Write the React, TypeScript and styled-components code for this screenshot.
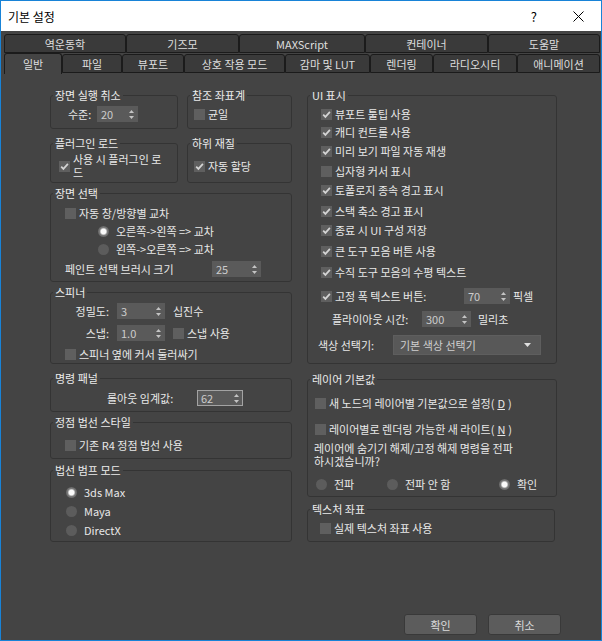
import React from "react";
import styled, { createGlobalStyle } from "styled-components";

const GlobalStyle = createGlobalStyle`
  html, body { margin: 0; padding: 0; background: #fff; }
  body { font-family: "Noto Sans CJK KR", "Noto Sans", sans-serif; font-size: 11px; }
  * { box-sizing: border-box; }
`;

const Window = styled.div`
  width: 602px;
  height: 641px;
  border: 1px solid #1883d7;
  background: #444444;
  display: flex;
  flex-direction: column;
  color: #e8e8e8;
`;

const TitleBar = styled.div`
  height: 30px;
  background: #ffffff;
  display: flex;
  align-items: center;
  padding: 0 17px 0 7px;
  color: #000;
`;

const Title = styled.span`
  font-size: 12px;
  flex: 1;
`;

const TitleControls = styled.div`
  display: flex;
  align-items: center;
  gap: 36px;
  font-size: 13px;
`;

const TabStrip = styled.div`
  padding: 3px 1px 0 3px;
  display: flex;
  flex-direction: column;
`;

const TabRow = styled.div<{ $h: number }>`
  display: flex;
  height: ${(p) => p.$h}px;
  align-items: flex-start;
`;

const Tab = styled.div<{ $w?: number; $active?: boolean; $bottom?: boolean }>`
  ${(p) => (p.$w ? `width: ${p.$w}px;` : "flex: 1;")}
  height: ${(p) => (p.$active ? 21 : 19)}px;
  margin-top: ${(p) => (p.$bottom && !p.$active ? 1 : 0)}px;
  background: ${(p) => (p.$active ? "#444444" : "#3a3a3a")};
  border: 1px solid #1b1b1b;
  border-bottom: ${(p) => (p.$active ? "none" : "1px solid #1b1b1b")};
  border-radius: 3px 3px 0 0;
  position: relative;
  z-index: ${(p) => (p.$active ? 1 : 0)};
  display: flex;
  align-items: center;
  justify-content: center;
  color: #dedede;
  line-height: 14px;
  white-space: nowrap;
`;

const Main = styled.div`
  flex: 1;
  display: flex;
  gap: 15px;
  padding: 15px 0 0 49px;
  align-items: flex-start;
`;

const Column = styled.div<{ $w: number }>`
  width: ${(p) => p.$w}px;
  display: flex;
  flex-direction: column;
`;

const Pair = styled.div<{ $mt?: number }>`
  display: flex;
  gap: 9px;
  margin-top: ${(p) => p.$mt ?? 0}px;
`;

const Group = styled.fieldset<{ $w?: number; $mt?: number; $pb?: number }>`
  margin: ${(p) => p.$mt ?? 0}px 0 0 0;
  padding: 0 0 ${(p) => p.$pb ?? 0}px 0;
  ${(p) => (p.$w ? `width: ${p.$w}px;` : "")}
  border: 1px solid #343434;
  border-radius: 3px;
  min-width: 0;
`;

const Legend = styled.legend`
  margin-left: 2px;
  padding: 0 2px;
  line-height: 14px;
  color: #ececec;
`;

const Row = styled.div<{ $mt?: number; $h: number; $pl?: number; $gap?: number }>`
  display: flex;
  align-items: center;
  height: ${(p) => p.$h}px;
  margin-top: ${(p) => p.$mt ?? 0}px;
  padding-left: ${(p) => p.$pl ?? 0}px;
  gap: ${(p) => p.$gap ?? 0}px;
  white-space: nowrap;
  line-height: 14px;
`;

const Label = styled.span<{ $w?: number; $right?: boolean }>`
  ${(p) => (p.$w ? `width: ${p.$w}px; flex: none;` : "")}
  text-align: ${(p) => (p.$right ? "right" : "left")};
`;

const Suffix = styled.span<{ $ml?: number }>`
  margin-left: ${(p) => p.$ml ?? 0}px;
`;

const Para = styled.div<{ $mt?: number; $pl?: number }>`
  margin-top: ${(p) => p.$mt ?? 0}px;
  padding-left: ${(p) => p.$pl ?? 0}px;
  line-height: 13px;
`;

const Box = styled.span`
  width: 11px;
  height: 11px;
  flex: none;
  background: #5f5f5f;
  display: inline-flex;
  align-items: center;
  justify-content: center;
`;

const CheckItem = styled.span<{ $gap?: number }>`
  display: inline-flex;
  align-items: center;
  gap: ${(p) => p.$gap ?? 3}px;
`;

const Dot = styled.span<{ $on?: boolean }>`
  width: 11px;
  height: 11px;
  flex: none;
  border-radius: 50%;
  background: ${(p) =>
    p.$on
      ? "radial-gradient(circle, #fafafa 0 2.5px, #c9c9c9 3px, #7a7a7a 4px, #666 5.5px)"
      : "#5c5c5c"};
`;

const RadioItem = styled.span<{ $w?: number }>`
  display: inline-flex;
  align-items: center;
  gap: 7px;
  ${(p) => (p.$w ? `width: ${p.$w}px;` : "")}
`;

const SpinBox = styled.div<{ $w: number; $focus?: boolean }>`
  width: ${(p) => p.$w}px;
  height: 16px;
  flex: none;
  background: #5a5a5a;
  border: 1px solid ${(p) => (p.$focus ? "#a3a3a3" : "#5a5a5a")};
  color: #cccccc;
  display: flex;
  align-items: center;
  justify-content: space-between;
  padding: 0 3px 0 3px;
  line-height: 14px;
`;

const Dropdown = styled.div`
  width: 148px;
  height: 20px;
  background: #585858;
  border: 1px solid #5e5e5e;
  color: #cfcfcf;
  display: flex;
  align-items: center;
  justify-content: space-between;
  padding: 0 9px 0 6px;
`;

const Footer = styled.div`
  display: flex;
  justify-content: flex-end;
  gap: 11px;
  padding: 0 40px 5px 0;
`;

const Button = styled.div`
  width: 73px;
  height: 21px;
  background: #5c5c5c;
  border: 1px solid #393939;
  border-radius: 3px;
  color: #dcdcdc;
  display: flex;
  align-items: center;
  justify-content: center;
`;

const Check = ({ on, children }: { on?: boolean; children?: React.ReactNode }) => (
  <CheckItem>
    <Box>
      {on && (
        <svg width="11" height="11" viewBox="0 0 11 11">
          <path d="M2.2 5.6 L4.4 7.9 L8.9 2.9" fill="none" stroke="#d4d4d4" strokeWidth="1.7" />
        </svg>
      )}
    </Box>
    {children}
  </CheckItem>
);

const Radio = ({ on, w, children }: { on?: boolean; w?: number; children: React.ReactNode }) => (
  <RadioItem $w={w}>
    <Dot $on={on} />
    <span>{children}</span>
  </RadioItem>
);

const Arrows = () => (
  <svg width="5" height="9" viewBox="0 0 5 9">
    <path d="M2.5 0 L5 3 L0 3 Z" fill="#c4c4c4" />
    <path d="M0 6 L5 6 L2.5 9 Z" fill="#c4c4c4" />
  </svg>
);

const Spinner = ({ w, value, focus }: { w: number; value: string; focus?: boolean }) => (
  <SpinBox $w={w} $focus={focus}>
    <span>{value}</span>
    <Arrows />
  </SpinBox>
);

const topTabs: [string, number | undefined][] = [
  ["역운동학", 122],
  ["기즈모", 113],
  ["MAXScript", 126],
  ["컨테이너", 123],
  ["도움말", undefined],
];

const bottomTabs: [string, number | undefined][] = [
  ["일반", 58],
  ["파일", 60],
  ["뷰포트", 62],
  ["상호 작용 모드", 101],
  ["감마 및 LUT", 85],
  ["렌더링", 63],
  ["라디오시티", 84],
  ["애니메이션", undefined],
];

const uiChecks: [string, boolean, number][] = [
  ["뷰포트 툴팁 사용", true, 4],
  ["캐디 컨트롤 사용", true, 2],
  ["미리 보기 파일 자동 재생", true, 3],
  ["십자형 커서 표시", false, 4],
  ["토폴로지 종속 경고 표시", true, 3],
  ["스택 축소 경고 표시", true, 5],
  ["종료 시 UI 구성 저장", true, 3],
  ["큰 도구 모음 버튼 사용", true, 5],
  ["수직 도구 모음의 수평 텍스트", true, 5],
];

export default function App() {
  return (
    <>
      <GlobalStyle />
      <Window>
        <TitleBar>
          <Title>기본 설정</Title>
          <TitleControls>
            <span>?</span>
            <svg width="11" height="11" viewBox="0 0 11 11">
              <path d="M0.5 0.5 L10.5 10.5 M10.5 0.5 L0.5 10.5" stroke="#000" strokeWidth="1" />
            </svg>
          </TitleControls>
        </TitleBar>

        <TabStrip>
          <TabRow $h={19}>
            {topTabs.map(([name, w]) => (
              <Tab key={name} $w={w}>
                {name}
              </Tab>
            ))}
          </TabRow>
          <TabRow $h={20}>
            {bottomTabs.map(([name, w], i) => (
              <Tab key={name} $w={w} $bottom $active={i === 0}>
                {name}
              </Tab>
            ))}
          </TabRow>
        </TabStrip>

        <Main>
          <Column $w={242}>
            <Pair>
              <Group $w={128} $pb={6}>
                <Legend>장면 실행 취소</Legend>
                <Row $mt={4} $h={16} $pl={17}>
                  <Label $w={29}>수준:</Label>
                  <Spinner w={41} value="20" />
                </Row>
              </Group>
              <Group $w={105} $pb={6}>
                <Legend>참조 좌표계</Legend>
                <Row $mt={4} $h={16} $pl={6}>
                  <Check>균일</Check>
                </Row>
              </Group>
            </Pair>

            <Pair $mt={7}>
              <Group $w={128} $pb={3}>
                <Legend>플러그인 로드</Legend>
                <Row $mt={3} $h={26} $pl={8}>
                  <Check on>
                    <Para>
                      사용 시 플러그인 로<br />드
                    </Para>
                  </Check>
                </Row>
              </Group>
              <Group $w={105} $pb={3}>
                <Legend>하위 재질</Legend>
                <Row $mt={3} $h={26} $pl={6}>
                  <Check on>자동 할당</Check>
                </Row>
              </Group>
            </Pair>

            <Group $mt={3} $pb={1}>
              <Legend>장면 선택</Legend>
              <Row $mt={4} $h={18} $pl={14}>
                <Check>자동 창/방향별 교차</Check>
              </Row>
              <Row $h={18} $pl={47}>
                <Radio on>오른쪽-&gt;왼쪽 =&gt; 교차</Radio>
              </Row>
              <Row $h={18} $pl={47}>
                <Radio>왼쪽-&gt;오른쪽 =&gt; 교차</Radio>
              </Row>
              <Row $h={22} $pl={14}>
                <Label $w={147}>페인트 선택 브러시 크기</Label>
                <Spinner w={49} value="25" />
              </Row>
            </Group>

            <Group $mt={3} $pb={0}>
              <Legend>스피너</Legend>
              <Row $mt={3} $h={18} $gap={8}>
                <Label $w={58} $right>
                  정밀도:
                </Label>
                <Spinner w={48} value="3" />
                <span>십진수</span>
              </Row>
              <Row $mt={4} $h={18} $gap={8}>
                <Label $w={58} $right>
                  스냅:
                </Label>
                <Spinner w={48} value="1.0" />
                <Check>스냅 사용</Check>
              </Row>
              <Row $mt={3} $h={18} $pl={14}>
                <Check>스피너 옆에 커서 둘러싸기</Check>
              </Row>
            </Group>

            <Group $mt={7} $pb={4}>
              <Legend>명령 패널</Legend>
              <Row $mt={4} $h={18} $pl={56}>
                <Label $w={90}>롤아웃 임계값:</Label>
                <Spinner w={46} value="62" focus />
              </Row>
            </Group>

            <Group $mt={3} $pb={4}>
              <Legend>정점 법선 스타일</Legend>
              <Row $mt={7} $h={18} $pl={14}>
                <Check>기존 R4 정점 법선 사용</Check>
              </Row>
            </Group>

            <Group $mt={4} $pb={2}>
              <Legend>법선 범프 모드</Legend>
              <Row $mt={6} $h={18} $pl={15}>
                <Radio on>3ds Max</Radio>
              </Row>
              <Row $mt={1} $h={18} $pl={15}>
                <Radio>Maya</Radio>
              </Row>
              <Row $mt={1} $h={18} $pl={15}>
                <Radio>DirectX</Radio>
              </Row>
            </Group>
          </Column>

          <Column $w={250}>
            <Group $pb={8}>
              <Legend>UI 표시</Legend>
              {uiChecks.map(([text, on, mt]) => (
                <Row key={text} $mt={mt} $h={16} $pl={13}>
                  <Check on={on}>{text}</Check>
                </Row>
              ))}
              <Row $mt={8} $h={16} $pl={13} $gap={3}>
                <Check on>
                  <Label $w={126}>고정 폭 텍스트 버튼:</Label>
                </Check>
                <Spinner w={46} value="70" />
                <span>픽셀</span>
              </Row>
              <Row $mt={7} $h={16} $pl={24}>
                <Label $w={90}>플라이아웃 시간:</Label>
                <Spinner w={49} value="300" />
                <Suffix $ml={7}>밀리초</Suffix>
              </Row>
              <Row $mt={8} $h={20} $pl={10}>
                <Label $w={75}>색상 선택기:</Label>
                <Dropdown>
                  <span>기본 색상 선택기</span>
                  <svg width="7" height="4" viewBox="0 0 7 4">
                    <path d="M0 0 L7 0 L3.5 4 Z" fill="#e0e0e0" />
                  </svg>
                </Dropdown>
              </Row>
            </Group>

            <Group $mt={8} $pb={4}>
              <Legend>레이어 기본값</Legend>
              <Row $mt={9} $h={16} $pl={7}>
                <Check>
                  새 노드의 레이어별 기본값으로 설정(<u>D</u>)
                </Check>
              </Row>
              <Row $mt={10} $h={16} $pl={7}>
                <Check>
                  레이어별로 렌더링 가능한 새 라이트(<u>N</u>)
                </Check>
              </Row>
              <Para $mt={5} $pl={6}>
                레이어에 숨기기 해제/고정 해제 명령을 전파
                <br />
                하시겠습니까?
              </Para>
              <Row $mt={8} $h={16} $pl={8}>
                <Radio w={71}>전파</Radio>
                <Radio w={112}>전파 안 함</Radio>
                <Radio on>확인</Radio>
              </Row>
            </Group>

            <Group $w={248} $mt={5} $pb={5}>
              <Legend>텍스처 좌표</Legend>
              <Row $mt={4} $h={16} $pl={12}>
                <Check>실제 텍스처 좌표 사용</Check>
              </Row>
            </Group>
          </Column>
        </Main>

        <Footer>
          <Button>확인</Button>
          <Button>취소</Button>
        </Footer>
      </Window>
    </>
  );
}
